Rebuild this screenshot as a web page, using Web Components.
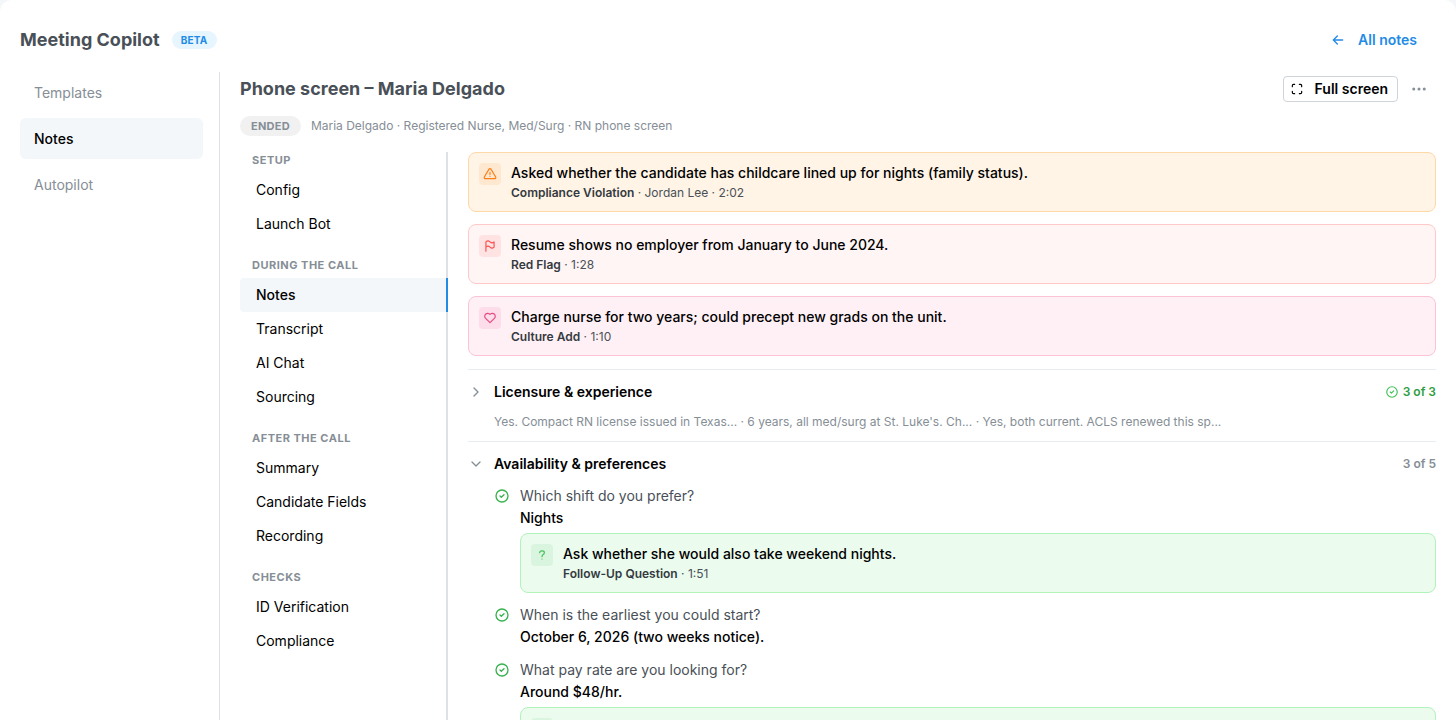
<!DOCTYPE html>
<html lang="en">
<head>
    <meta charset="utf-8">
    <meta name="viewport" content="width=device-width, initial-scale=1">
    <title>Meeting Copilot</title>
    <style>
        html, body {
            height: 100%;
        }
        body {
            margin: 0;
            background: #f3f7fa;
            color: #000;
            font-family: Inter, 'Liberation Sans', sans-serif;
            font-size: 14px;
            line-height: 22px;
            overflow: hidden;
        }
    </style>
</head>
<body>
    <mc-app>
        <mc-header slot="header" badge="Beta" back="All notes">Meeting Copilot</mc-header>

        <mc-side-nav slot="side">
            <a href="#templates">Templates</a>
            <a href="#notes" aria-current="page">Notes</a>
            <a href="#autopilot">Autopilot</a>
        </mc-side-nav>

        <mc-note-header status="Ended" meta="Maria Delgado · Registered Nurse, Med/Surg · RN phone screen">Phone screen – Maria Delgado</mc-note-header>

        <mc-note-body>
            <mc-steps slot="nav">
                <mc-step-group label="Setup">
                    <a href="#config">Config</a>
                    <a href="#launch">Launch Bot</a>
                </mc-step-group>
                <mc-step-group label="During the call">
                    <a href="#call-notes" aria-current="page">Notes</a>
                    <a href="#transcript">Transcript</a>
                    <a href="#chat">AI Chat</a>
                    <a href="#sourcing">Sourcing</a>
                </mc-step-group>
                <mc-step-group label="After the call">
                    <a href="#summary">Summary</a>
                    <a href="#fields">Candidate Fields</a>
                    <a href="#recording">Recording</a>
                </mc-step-group>
                <mc-step-group label="Checks">
                    <a href="#id">ID Verification</a>
                    <a href="#compliance">Compliance</a>
                </mc-step-group>
            </mc-steps>

            <mc-insight kind="violation" label="Compliance Violation" detail="Jordan Lee · 2:02">Asked whether the candidate has childcare lined up for nights (family status).</mc-insight>
            <mc-insight kind="flag" label="Red Flag" detail="1:28">Resume shows no employer from January to June 2024.</mc-insight>
            <mc-insight kind="culture" label="Culture Add" detail="1:10">Charge nurse for two years; could precept new grads on the unit.</mc-insight>

            <mc-section slot="sections" label="Licensure &amp; experience" count="3 of 3" complete preview="Yes. Compact RN license issued in Texas... · 6 years, all med/surg at St. Luke's. Ch... · Yes, both current. ACLS renewed this sp..."></mc-section>
            <mc-section slot="sections" label="Availability &amp; preferences" count="3 of 5" open>
                <mc-question text="Which shift do you prefer?" answer="Nights">
                    <mc-insight kind="followup" label="Follow-Up Question" detail="1:51">Ask whether she would also take weekend nights.</mc-insight>
                </mc-question>
                <mc-question text="When is the earliest you could start?" answer="October 6, 2026 (two weeks notice)."></mc-question>
                <mc-question text="What pay rate are you looking for?" answer="Around $48/hr.">
                    <mc-insight kind="followup"></mc-insight>
                </mc-question>
            </mc-section>
        </mc-note-body>
    </mc-app>

    <script>
        const ICONS = {
            arrowLeft: '<path d="M5 12h14M5 12l6 6M5 12l6-6"/>',
            maximize: '<path d="M4 8V6a2 2 0 0 1 2-2h2M4 16v2a2 2 0 0 0 2 2h2M16 4h2a2 2 0 0 1 2 2v2M16 20h2a2 2 0 0 0 2-2v-2"/>',
            dots: '<circle cx="5" cy="12" r="1"/><circle cx="12" cy="12" r="1"/><circle cx="19" cy="12" r="1"/>',
            chevronRight: '<path d="M9 6l6 6l-6 6"/>',
            chevronDown: '<path d="M6 9l6 6l6-6"/>',
            circleCheck: '<circle cx="12" cy="12" r="9"/><path d="M9 12l2 2l4-4"/>',
            violation: '<path d="M12 9v4M12 16h.01"/><path d="M10.363 3.591L2.257 17.125a1.914 1.914 0 0 0 1.636 2.871h16.214a1.914 1.914 0 0 0 1.636-2.87L13.637 3.59a1.914 1.914 0 0 0-3.274 0z"/>',
            flag: '<path d="M5 5a5 5 0 0 1 7 0a5 5 0 0 0 7 0v9a5 5 0 0 1-7 0a5 5 0 0 0-7 0V5zM5 21v-7"/>',
            culture: '<path d="M19.5 12.572L12 20l-7.5-7.428A5 5 0 1 1 12 6.006a5 5 0 1 1 7.5 6.572"/>',
            followup: '<path d="M8 8a3.500 3 0 0 1 3.500-3h1a3.500 3 0 0 1 3.500 3a3 3 0 0 1-2 3a3 4 0 0 0-2 4M12 19v.01"/>'
        }

        const icon = (name, size, stroke = 2) => `<svg width="${size}" height="${size}" viewBox="0 0 24 24" fill="none" stroke="currentColor" stroke-width="${stroke}" stroke-linecap="round" stroke-linejoin="round" aria-hidden="true">${ICONS[name]}</svg>`

        /**
         * Shared base: attaches the shadow root and renders once
         */
        class McElement extends HTMLElement {
            constructor() {
                super()
                this.shadow = this.attachShadow({ mode: 'open' })
                this.shadow.innerHTML = /*html*/ `
                    <style>
                        * { box-sizing: border-box; }
                        h1, h2, h3, p { margin: 0; font-size: inherit; font-weight: inherit; }
                        button { font: inherit; margin: 0; cursor: pointer; }
                        svg { display: block; flex: none; }
                        :host { display: block; }
                    </style>
                    ${this.render()}
                `
            }

            attr(name) {
                return (this.getAttribute(name) || '').replace(/&/g, '&amp;').replace(/</g, '&lt;')
            }
        }

        class McApp extends McElement {
            render() {
                return /*html*/ `
                    <style>
                        :host { height: 100%; }
                        .panel {
                            display: flex;
                            flex-direction: column;
                            min-height: 100%;
                            padding: 20px 20px 0;
                            border-radius: 12px;
                            background: #fff;
                            box-sizing: border-box;
                        }
                        .columns {
                            display: flex;
                            flex: 1;
                            margin-top: 12px;
                        }
                        main {
                            flex: 1;
                            min-width: 0;
                            display: flex;
                            flex-direction: column;
                            padding: 4px 0 0 20px;
                        }
                    </style>
                    <div class="panel">
                        <slot name="header"></slot>
                        <div class="columns">
                            <slot name="side"></slot>
                            <main><slot></slot></main>
                        </div>
                    </div>
                `
            }
        }

        class McHeader extends McElement {
            render() {
                return /*html*/ `
                    <style>
                        header {
                            display: flex;
                            align-items: center;
                            gap: 12px;
                            height: 40px;
                        }
                        h1 { font-size: 18px; font-weight: 700; color: #495057; }
                        .badge {
                            padding: 0 9px;
                            border-radius: 9px;
                            background: #e7f5ff;
                            color: #228be6;
                            font-size: 10px;
                            font-weight: 700;
                            line-height: 18px;
                            letter-spacing: 0.25px;
                            text-transform: uppercase;
                        }
                        .back {
                            display: flex;
                            align-items: center;
                            gap: 12px;
                            margin-left: auto;
                            padding: 0 19px;
                            color: #228be6;
                            font-weight: 600;
                            text-decoration: none;
                        }
                    </style>
                    <header>
                        <h1><slot></slot></h1>
                        <span class="badge">${this.attr('badge')}</span>
                        <a class="back" href="#all">${icon('arrowLeft', 16)}${this.attr('back')}</a>
                    </header>
                `
            }
        }

        class McSideNav extends McElement {
            render() {
                return /*html*/ `
                    <style>
                        :host {
                            flex: none;
                            width: 200px;
                            border-right: 1px solid #dee2e6;
                            box-sizing: border-box;
                        }
                        nav {
                            display: flex;
                            flex-direction: column;
                            gap: 5px;
                            padding-right: 16px;
                        }
                        ::slotted(a) {
                            padding: 10px 14px;
                            border-radius: 6px;
                            color: #868e96;
                            line-height: 21px;
                            text-decoration: none;
                        }
                        ::slotted(a[aria-current]) {
                            background: #f3f7fa;
                            color: #000;
                            font-weight: 500;
                        }
                    </style>
                    <nav aria-label="Copilot"><slot></slot></nav>
                `
            }
        }

        class McNoteHeader extends McElement {
            render() {
                return /*html*/ `
                    <style>
                        .row { display: flex; align-items: center; }
                        h2 {
                            flex: 1;
                            color: #495057;
                            font-size: 18px;
                            font-weight: 700;
                            line-height: 26px;
                        }
                        .full {
                            display: flex;
                            align-items: center;
                            gap: 11px;
                            height: 26px;
                            padding: 0 9px 0 6px;
                            border: 1px solid #ced4da;
                            border-radius: 4px;
                            background: #fff;
                            color: #000;
                            font-weight: 600;
                        }
                        .more {
                            margin-left: 4px;
                            padding: 0 8px;
                            border: 0;
                            background: none;
                            color: #868e96;
                        }
                        .meta {
                            gap: 10px;
                            margin: 14px 0 16px;
                            color: #868e96;
                            font-size: 12px;
                            line-height: 20px;
                        }
                        .status {
                            padding: 0 11px;
                            border-radius: 10px;
                            background: #f1f1f2;
                            font-size: 11px;
                            font-weight: 700;
                            letter-spacing: 0.25px;
                            text-transform: uppercase;
                        }
                    </style>
                    <div class="row">
                        <h2><slot></slot></h2>
                        <button class="full" type="button">${icon('maximize', 14)}Full screen</button>
                        <button class="more" type="button" aria-label="More actions">${icon('dots', 18)}</button>
                    </div>
                    <div class="row meta">
                        <span class="status">${this.attr('status')}</span>
                        <span>${this.attr('meta')}</span>
                    </div>
                `
            }
        }

        class McNoteBody extends McElement {
            render() {
                return /*html*/ `
                    <style>
                        :host {
                            display: flex;
                            flex: 1;
                            gap: 20px;
                        }
                        .content { flex: 1; min-width: 0; }
                        .insights {
                            display: flex;
                            flex-direction: column;
                            gap: 12px;
                            margin-bottom: 13px;
                        }
                    </style>
                    <slot name="nav"></slot>
                    <div class="content">
                        <div class="insights"><slot></slot></div>
                        <slot name="sections"></slot>
                    </div>
                `
            }
        }

        class McSteps extends McElement {
            render() {
                return /*html*/ `
                    <style>
                        :host {
                            flex: none;
                            width: 208px;
                            background: linear-gradient(#dee2e6, #dee2e6) right / 2px 100% no-repeat;
                        }
                        nav {
                            display: flex;
                            flex-direction: column;
                            gap: 16px;
                        }
                    </style>
                    <nav aria-label="Note steps"><slot></slot></nav>
                `
            }
        }

        class McStepGroup extends McElement {
            render() {
                return /*html*/ `
                    <style>
                        h3 {
                            padding: 0 12px 4px;
                            color: #868e96;
                            font-size: 11px;
                            font-weight: 700;
                            line-height: 17px;
                            letter-spacing: 0.5px;
                            text-transform: uppercase;
                        }
                        ::slotted(a) {
                            display: block;
                            padding: 6px 14px 6px 16px;
                            border-right: 2px solid transparent;
                            border-radius: 4px 0 0 4px;
                            color: #000;
                            text-decoration: none;
                        }
                        ::slotted(a[aria-current]) {
                            border-right-color: #228be6;
                            background: #f3f7fa;
                            font-weight: 500;
                        }
                    </style>
                    <h3>${this.attr('label')}</h3>
                    <slot></slot>
                `
            }
        }

        class McInsight extends McElement {
            render() {
                const kind = this.getAttribute('kind')
                return /*html*/ `
                    <style>
                        .card {
                            display: flex;
                            gap: 10px;
                            min-height: 60px;
                            padding: 10px 10px 8px;
                            border: 1px solid var(--line);
                            border-radius: 8px;
                            background: var(--fill);
                        }
                        .violation { --line: #ffd8a8; --fill: #fff4e6; --tint: #ffe8d0; --ink: #fd7e14; }
                        .flag { --line: #ffc9c9; --fill: #fff5f5; --tint: #ffe3e3; --ink: #fa5252; }
                        .culture { --line: #fcc2d7; --fill: #fff0f6; --tint: #fcdde9; --ink: #e64980; }
                        .followup { --line: #b2f2bb; --fill: #ebfbee; --tint: #daf5df; --ink: #40c057; }
                        .icon {
                            display: grid;
                            place-items: center;
                            flex: none;
                            width: 22px;
                            height: 22px;
                            border-radius: 4px;
                            background: var(--tint);
                            color: var(--ink);
                        }
                        .title { font-weight: 500; line-height: 20px; }
                        .sub { color: #495057; font-size: 12px; line-height: 20px; }
                        b { color: #343a40; font-weight: 600; }
                    </style>
                    <div class="card ${kind}">
                        <span class="icon">${icon(kind, 14)}</span>
                        <div>
                            <p class="title"><slot></slot></p>
                            ${this.hasAttribute('label') ? `<p class="sub"><b>${this.attr('label')}</b> · ${this.attr('detail')}</p>` : ''}
                        </div>
                    </div>
                `
            }
        }

        class McSection extends McElement {
            render() {
                const open = this.hasAttribute('open')
                const complete = this.hasAttribute('complete')
                return /*html*/ `
                    <style>
                        :host { border-top: 1px solid #e9ecef; }
                        .head {
                            display: flex;
                            align-items: center;
                            width: 100%;
                            gap: 10px;
                            padding: 11px 0 10px;
                            border: 0;
                            background: none;
                            color: #000;
                            font-weight: 600;
                            text-align: left;
                        }
                        .chevron { color: #868e96; }
                        .label { flex: 1; }
                        .count {
                            display: flex;
                            align-items: center;
                            gap: 4px;
                            color: #868e96;
                            font-size: 12px;
                        }
                        .count.complete { color: #2f9e44; }
                        .count svg { color: #40c057; }
                        .preview {
                            padding: 0 0 11px 26px;
                            color: #868e96;
                            font-size: 12px;
                            line-height: 17px;
                        }
                        .list {
                            display: flex;
                            flex-direction: column;
                            gap: 11px;
                            padding-left: 26px;
                        }
                    </style>
                    <button class="head" type="button" aria-expanded="${open}">
                        <span class="chevron">${icon(open ? 'chevronDown' : 'chevronRight', 16)}</span>
                        <span class="label">${this.attr('label')}</span>
                        <span class="count ${complete ? 'complete' : ''}">${complete ? icon('circleCheck', 14) : ''}${this.attr('count')}</span>
                    </button>
                    ${open ? '<div class="list"><slot></slot></div>' : `<p class="preview">${this.attr('preview')}</p>`}
                `
            }
        }

        class McQuestion extends McElement {
            render() {
                return /*html*/ `
                    <style>
                        .item { display: flex; gap: 10px; }
                        .check { padding-top: 3px; color: #37b24d; }
                        .text { flex: 1; min-width: 0; }
                        .question { color: #495057; }
                        .answer { font-weight: 500; }
                        ::slotted(mc-insight) { margin-top: 4px; }
                    </style>
                    <div class="item">
                        <span class="check">${icon('circleCheck', 16)}</span>
                        <div class="text">
                            <p class="question">${this.attr('text')}</p>
                            <p class="answer">${this.attr('answer')}</p>
                            <slot></slot>
                        </div>
                    </div>
                `
            }
        }

        customElements.define('mc-app', McApp)
        customElements.define('mc-header', McHeader)
        customElements.define('mc-side-nav', McSideNav)
        customElements.define('mc-note-header', McNoteHeader)
        customElements.define('mc-note-body', McNoteBody)
        customElements.define('mc-steps', McSteps)
        customElements.define('mc-step-group', McStepGroup)
        customElements.define('mc-insight', McInsight)
        customElements.define('mc-section', McSection)
        customElements.define('mc-question', McQuestion)
    </script>
</body>
</html>
